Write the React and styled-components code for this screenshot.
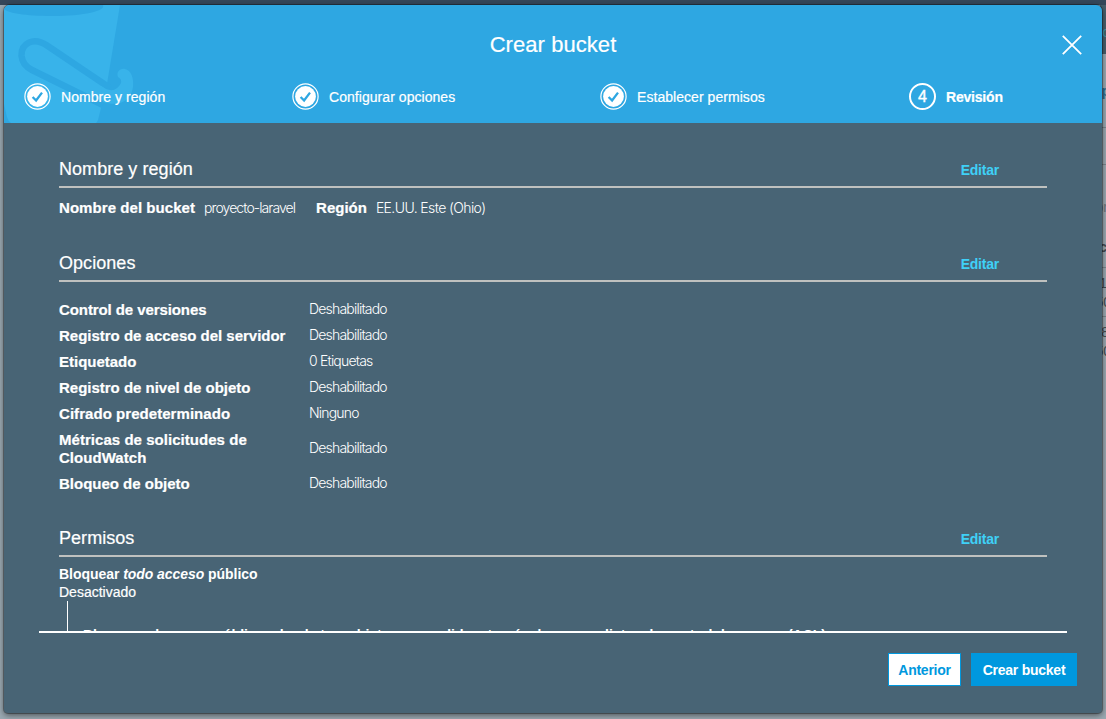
import React from 'react';
import styled, { createGlobalStyle } from 'styled-components';

const Global = createGlobalStyle`
  * { box-sizing: border-box; }
  html, body { margin: 0; height: 100%; overflow: hidden; }
  body { font-family: "Liberation Sans", Arial, sans-serif; font-size: 14px; line-height: 18px; color: #fff; }
`;

const Page = styled.div`
  position: relative;
  width: 1106px;
  height: 719px;
  overflow: hidden;
  background: #9ba9b2;
`;
const Backdrop = styled.div`
  position: absolute;
  inset: 0;
  display: flex;
  flex-direction: column;
`;
const NavBar = styled.div`
  height: 5px;
  background: #35475a;
`;
const BackRow = styled.div`
  display: flex;
  justify-content: flex-end;
`;
const SidePeek = styled.div`
  width: 6px;
  height: 714px;
  overflow: hidden;
`;
const PeekDark = styled.div`
  height: 49px;
  background: #485f6c;
`;
const PeekLine = styled.div`
  height: ${p => p.$h}px;
  border-bottom: 1px solid #7c868d;
`;
const PeekText = styled.span`
  position: absolute;
  right: ${p => p.$right ?? -4}px;
  top: ${p => p.$top}px;
  font-size: 14px;
  font-weight: ${p => (p.$bold ? 700 : 400)};
  color: ${p => p.$color || '#454d53'};
`;
const Modal = styled.div`
  position: relative;
  display: flex;
  flex-direction: column;
  width: 1098px;
  height: 708px;
  margin: 5px 0 0 4px;
  background: #486475;
  border-radius: 6px 6px 4px 4px;
  box-shadow: 0 0 0 1px rgba(0, 0, 0, 0.3), 0 2px 6px rgba(0, 0, 0, 0.55);
  overflow: hidden;
`;
const Layer = styled.div`
  position: relative;
  display: flex;
`;
const Header = styled.header`
  position: relative;
  flex: none;
  height: 118px;
  background: #2ea7e2;
`;
const BucketArt = styled.svg`
  position: absolute;
  left: 0;
  top: 0;
`;
const TitleBar = styled.div`
  position: relative;
  display: flex;
  justify-content: center;
  padding-top: 27px;
`;
const Title = styled.h1`
  margin: 0;
  font-size: 22px;
  line-height: 26px;
  font-weight: 400;
  letter-spacing: 0.06px;
  -webkit-text-stroke: 0.2px #fff;
`;
const Close = styled.button`
  position: absolute;
  right: 20px;
  top: 30px;
  padding: 0;
  border: 0;
  background: none;
  svg { display: block; }
`;
const Steps = styled.nav`
  position: relative;
  display: flex;
  padding: 24px 0 0 20px;
`;
const Step = styled.div`
  display: flex;
  align-items: center;
  width: ${p => p.$w}px;
  height: 28px;
  gap: 10px;
  svg { flex: none; }
`;
const StepName = styled.span`
  padding-top: 2px;
  font-weight: ${p => (p.$current ? 700 : 400)};
  letter-spacing: ${p => (p.$current ? '-0.2px' : '0.05px')};
  -webkit-text-stroke: 0.2px #fff;
`;
const Number = styled.span`
  display: flex;
  align-items: center;
  justify-content: center;
  width: 27px;
  height: 27px;
  margin-left: 1px;
  padding-top: 1px;
  border: 2px solid #fff;
  border-radius: 50%;
  font-size: 16px;
  -webkit-text-stroke: 0.4px #fff;
`;
const Scroll = styled.main`
  flex: none;
  height: 508px;
  margin: 0 35px;
  padding: 33px 20px 0;
  overflow: hidden;
`;
const Section = styled.section`
  margin-bottom: ${p => p.$mb || 0}px;
`;
const SectionHead = styled.div`
  display: flex;
  justify-content: space-between;
  height: 32px;
  padding-right: 48px;
  border-bottom: 2px solid #bfc1bf;
`;
const SectionTitle = styled.h2`
  margin: 0;
  font-size: 18px;
  line-height: 26px;
  font-weight: 400;
  letter-spacing: 0.05px;
  -webkit-text-stroke: 0.2px #fff;
`;
const Edit = styled.a`
  line-height: 28px;
  font-weight: 700;
  letter-spacing: -0.22px;
  color: #3fd0f7;
`;
const Inline = styled.div`
  display: flex;
  padding-top: 11px;
`;
const Label = styled.span`
  font-size: 15px;
  font-weight: 700;
  letter-spacing: ${p => p.$track ?? -0.01}px;
  -webkit-text-stroke: 0.2px #fff;
`;
const Value = styled.span`
  font-family: Inter, Roboto, sans-serif;
  font-size: 14px;
  font-weight: 300;
  letter-spacing: ${p => p.$track ?? -0.8}px;
  margin: 0 ${p => p.$mr || 0}px 0 ${p => p.$ml || 0}px;
`;
const Options = styled.div`
  display: grid;
  grid-template-columns: 250px 1fr;
  row-gap: 8px;
  align-items: center;
  padding-top: 19px;
  & > ${Value} { margin: -1px 0 1px; }
`;
const Block = styled.div`
  padding-top: 8px;
`;
const Strong = styled.div`
  font-weight: 700;
  letter-spacing: ${p => p.$track || 0}px;
  white-space: nowrap;
`;
const Status = styled.div`
  -webkit-text-stroke: 0.2px #fff;
`;
const Nested = styled.div`
  margin-left: 8px;
  padding: 25px 0 30px 15px;
  border-left: 1px solid #fff;
`;
const Footer = styled.footer`
  display: flex;
  justify-content: flex-end;
  gap: 10px;
  margin: 0 35px;
  padding-top: 20px;
  border-top: 2px solid #fff;
`;
const Button = styled.button`
  flex: none;
  width: ${p => p.$w}px;
  height: 33px;
  padding: 0;
  border: 1px solid #0098de;
  background: ${p => (p.$primary ? '#0098de' : '#fff')};
  color: ${p => (p.$primary ? '#fff' : '#0098de')};
  font: 700 14px/18px "Liberation Sans", Arial, sans-serif;
  letter-spacing: -0.25px;
  &:last-child { margin-right: -10px; }
`;

const DoneMark = () => (
  <svg width="27" height="27" viewBox="0 0 27 27">
    <circle cx="13.5" cy="13.5" r="12.6" fill="none" stroke="#fff" strokeWidth="1.2" />
    <circle cx="13.5" cy="13.5" r="10.4" fill="#fff" />
    <path d="M8.6 14l3.5 3.5L18 9.6" fill="none" stroke="#2ea7e2" strokeWidth="2.3" />
  </svg>
);

const Heading = ({ children }) => (
  <SectionHead>
    <SectionTitle>{children}</SectionTitle>
    <Edit>Editar</Edit>
  </SectionHead>
);

const options = [
  ['Control de versiones', 'Deshabilitado', -0.09],
  ['Registro de acceso del servidor', 'Deshabilitado'],
  ['Etiquetado', '0 Etiquetas'],
  ['Registro de nivel de objeto', 'Deshabilitado'],
  ['Cifrado predeterminado', 'Ninguno', 0.05],
  [<>Métricas de solicitudes de<br />CloudWatch</>, 'Deshabilitado', 0.04],
  ['Bloqueo de objeto', 'Deshabilitado'],
];

export default function App() {
  return (
    <Page>
      <Global />
      <Backdrop>
        <NavBar />
        <BackRow>
          <SidePeek>
            <PeekDark />
            <PeekLine $h={74} />
            <PeekLine $h={37} />
            <PeekLine $h={103} />
            <PeekLine $h={49} />
          </SidePeek>
        </BackRow>
        <PeekText $top={23} $color="#3f93a6">o</PeekText>
        <PeekText $top={82} $bold $color="#2c6a90">p</PeekText>
        <PeekText $top={198} $right={-2} $color="#6b757c">or</PeekText>
        <PeekText $top={238} $right={-1} $bold>c</PeekText>
        <PeekText $top={274} $right={-1}>1</PeekText>
        <PeekText $top={293} $right={-5}>50</PeekText>
        <PeekText $top={323} $right={-3}>8</PeekText>
        <PeekText $top={342} $right={-5}>50</PeekText>
      </Backdrop>
      <Layer>
        <Modal>
          <Header>
            <BucketArt width="140" height="118" viewBox="4 5 140 118">
              <path d="M4 5H120L107 84L101 108L98 120Q97 122 96 123H11Q8 121 7 117L4 104Z" fill="#38b3ea" />
              <path d="M4 5H103C106 11 84 16 52 16C25 16 8 13 4 9Z" fill="#2ea7e2" />
              <path d="M110 88L47 45.500C33 36 21 44 21.500 55.500C22 62 26 67 32 70L103 105" fill="none" stroke="#2ea7e2" strokeWidth="6.500" />
              <path d="M101 86L106 89Q116 93 121 83Q122 79 118 77C116 72 120 68 125 69C131 70 134 78 133 87C131 101 119 107 103 102Z" fill="#38b3ea" />
            </BucketArt>
            <TitleBar><Title>Crear bucket</Title></TitleBar>
            <Close aria-label="Cerrar">
              <svg width="20" height="20" viewBox="0 0 20 20"><path d="M.8.8l18.4 18.4M19.2.8L.8 19.2" stroke="#fff" strokeWidth="1.8" /></svg>
            </Close>
            <Steps>
              <Step $w={268}><DoneMark /><StepName>Nombre y región</StepName></Step>
              <Step $w={308}><DoneMark /><StepName>Configurar opciones</StepName></Step>
              <Step $w={308}><DoneMark /><StepName>Establecer permisos</StepName></Step>
              <Step $w={150}><Number>4</Number><StepName $current>Revisión</StepName></Step>
            </Steps>
          </Header>
          <Scroll>
            <Section $mb={33}>
              <Heading>Nombre y región</Heading>
              <Inline>
                <Label $track={0.06}>Nombre del bucket</Label>
                <Value $ml={9} $mr={21} $track={-0.92}>proyecto-laravel</Value>
                <Label>Región</Label>
                <Value $ml={9} $track={-0.6}>EE.UU. Este (Ohio)</Value>
              </Inline>
            </Section>
            <Section $mb={32}>
              <Heading>Opciones</Heading>
              <Options>
                {options.map(([name, value, track], i) => (
                  <React.Fragment key={i}>
                    <Label $track={track}>{name}</Label>
                    <Value>{value}</Value>
                  </React.Fragment>
                ))}
              </Options>
            </Section>
            <Section>
              <Heading>Permisos</Heading>
              <Block>
                <Strong $track={-0.05}>Bloquear <em>todo acceso</em> público</Strong>
                <Status>Desactivado</Status>
                <Nested>
                  <Strong>Bloquear el acceso público a buckets y objetos concedido a través de nuevas listas de control de acceso (ACL)</Strong>
                </Nested>
              </Block>
            </Section>
          </Scroll>
          <Footer>
            <Button $w={73}>Anterior</Button>
            <Button $w={106} $primary>Crear bucket</Button>
          </Footer>
        </Modal>
      </Layer>
    </Page>
  );
}
